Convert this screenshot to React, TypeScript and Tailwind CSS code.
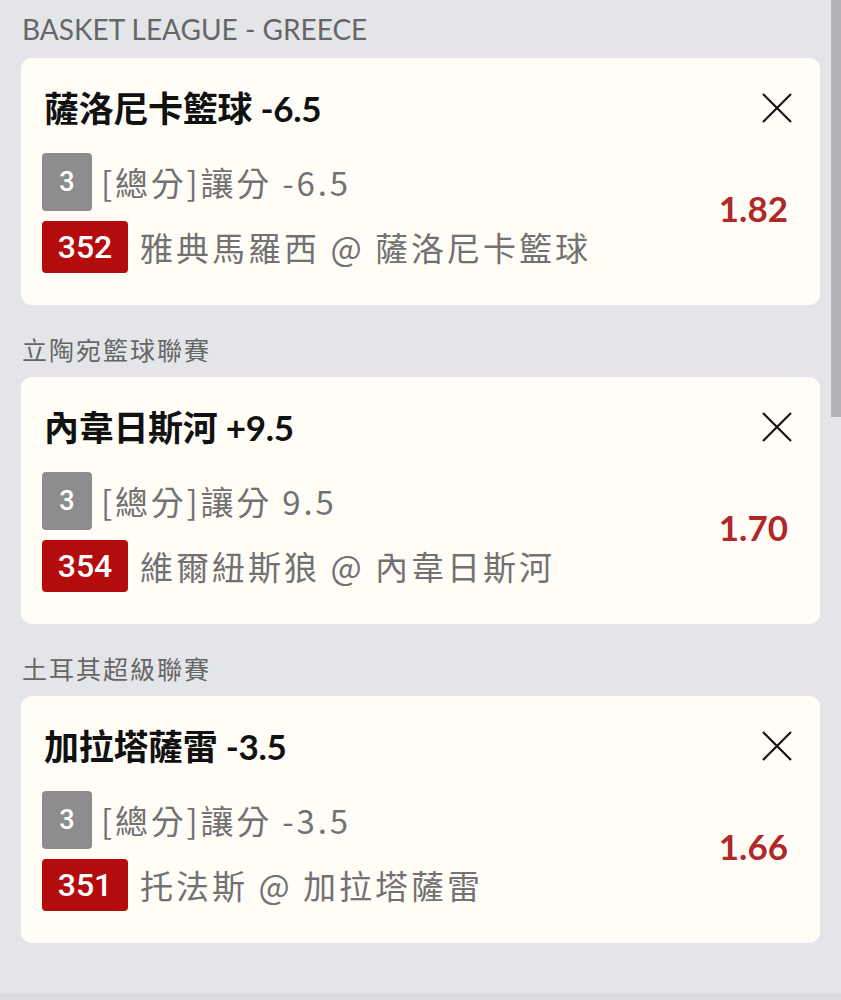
import React from "react";

type Bet = {
  league: string;
  latin?: boolean;
  title: string;
  market: string;
  code: string;
  match: string;
  odds: string;
};

const bets: Bet[] = [
  {
    league: "BASKET LEAGUE - GREECE",
    latin: true,
    title: "薩洛尼卡籃球 -6.5",
    market: "[總分]讓分 -6.5",
    code: "352",
    match: "雅典馬羅西 @ 薩洛尼卡籃球",
    odds: "1.82",
  },
  {
    league: "立陶宛籃球聯賽",
    title: "內韋日斯河 +9.5",
    market: "[總分]讓分 9.5",
    code: "354",
    match: "維爾紐斯狼 @ 內韋日斯河",
    odds: "1.70",
  },
  {
    league: "土耳其超級聯賽",
    title: "加拉塔薩雷 -3.5",
    market: "[總分]讓分 -3.5",
    code: "351",
    match: "托法斯 @ 加拉塔薩雷",
    odds: "1.66",
  },
];

function CloseIcon() {
  return (
    <svg width="32" height="32" viewBox="0 0 32 32" className="shrink-0">
      <path d="M2 2 L30 30 M30 2 L2 30" stroke="#111" strokeWidth="2.2" fill="none" />
    </svg>
  );
}

function Card({ bet }: { bet: Bet }) {
  return (
    <div className="rounded-[11px] bg-[#fffdf6] pl-[21px] pr-[32px] pt-[29px] pb-[32px]">
      <div className="flex items-center justify-between pl-[2px]">
        <div className="text-[35px] leading-[42px] font-bold text-[#111] font-['Lato','Noto_Sans_CJK_TC',sans-serif] tracking-[-0.3px]">
          {bet.title}
        </div>
        <div className="mr-[-5px]">
          <CloseIcon />
        </div>
      </div>
      <div className="mt-[24px] flex items-center">
        <div className="flex flex-1 flex-col gap-[10px]">
          <div className="flex items-center">
            <div className="flex h-[58px] w-[50px] items-center justify-center rounded-[4px] bg-[#8d8d8d] text-[27px] font-medium text-white font-['Roboto',sans-serif]">
              3
            </div>
            <div className="ml-[9px] text-[33px] leading-[42px] tracking-[2.8px] text-[#727272] font-['Noto_Sans_CJK_TC',sans-serif]">
              {bet.market}
            </div>
          </div>
          <div className="flex items-center">
            <div className="flex h-[52px] w-[86px] items-center justify-center rounded-[4px] bg-[#b40c0c] text-[32px] font-medium text-white font-['Roboto',sans-serif]">
              {bet.code}
            </div>
            <div className="ml-[12px] text-[33px] leading-[42px] tracking-[3px] text-[#727272] font-['Noto_Sans_CJK_TC',sans-serif]">
              {bet.match}
            </div>
          </div>
        </div>
        <div className="pb-[10px] text-[35px] leading-[40px] font-bold text-[#b0292a] font-['Lato',sans-serif]">
          {bet.odds}
        </div>
      </div>
    </div>
  );
}

export default function App() {
  return (
    <div className="relative min-h-[1000px] w-full overflow-hidden bg-[#e4e5e9]">
      <div className="px-[21px]">
        {bets.map((bet, i) => (
          <div key={i}>
            {bet.latin ? (
              <div className="pt-[11px] pb-[11px] pl-[1px] text-[28px] leading-[36px] text-[#666] font-['Lato',sans-serif]">
                {bet.league}
              </div>
            ) : (
              <div className="pt-[29px] pb-[13px] pl-[1px] text-[25px] leading-[30px] tracking-[2px] text-[#666] font-['Noto_Sans_CJK_TC',sans-serif]">
                {bet.league}
              </div>
            )}
            <Card bet={bet} />
          </div>
        ))}
      </div>
      <div className="absolute bottom-0 left-0 right-0 h-[7px] bg-[#dcdde1]" />
      <div className="absolute right-0 top-0 h-[417px] w-[10px] bg-[#b3b4b8]" />
    </div>
  );
}
